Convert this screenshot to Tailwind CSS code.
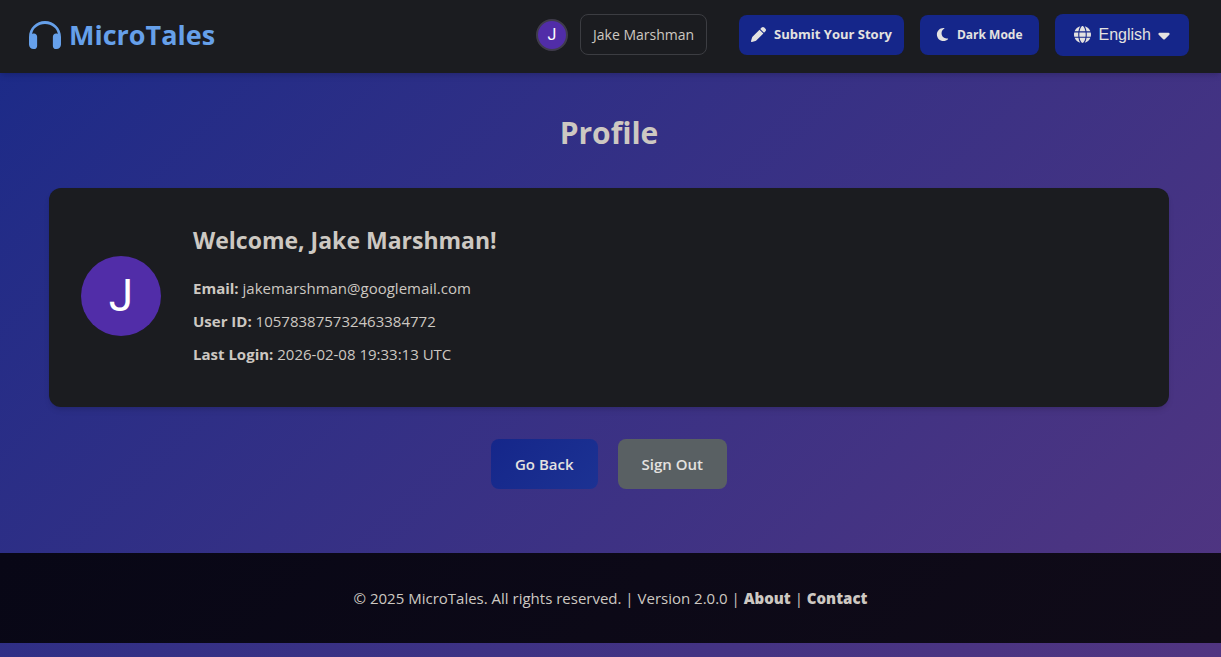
<!DOCTYPE html>
<html lang="en">
<head>
    <meta charset="UTF-8">
    <meta name="viewport" content="width=device-width, initial-scale=1.0">
    <title>Profile - MicroTales</title>
    <script src="https://cdn.jsdelivr.net/npm/@tailwindcss/browser@4"></script>
</head>
<body class="min-h-screen bg-linear-135 from-[#1a2a88] to-[#513581] font-['Segoe_UI','Open_Sans',sans-serif] text-[15px] text-[#cdc8c2]">

    <!--Navbar-->
    <header class="flex h-[73px] items-center justify-between bg-[#1b1c20] pr-8 pl-[29px] shadow-md">
        <a href="#" class="flex items-center gap-2 pb-1 text-[#66a0ea]">
            <svg class="h-7 w-8" viewBox="0 32 512 448" fill="currentColor" aria-hidden="true"><path d="M256 80C150 80 62 150 50 240c9-6 19-8 30-8c28 0 50 22 50 50V430c0 28-22 50-50 50H72C32 480 0 448 0 408V288C0 146.600 114.600 32 256 32s256 114.600 256 256V408c0 40-32 72-72 72h-8c-28 0-50-22-50-50V282c0-28 22-50 50-50c11 0 21 2 30 8C450 150 362 80 256 80z"/></svg>
            <span class="text-[27px] leading-9 font-bold">MicroTales</span>
        </a>
        <nav class="flex items-center gap-4 pb-1 text-[13px] text-[#e4e2e0]">
            <div class="mr-4 flex items-center gap-3">
                <span class="flex size-8 items-center justify-center rounded-full border-2 border-[#403c4c] bg-[#512da8] font-['Roboto',sans-serif] text-base text-white">J</span>
                <a href="#" class="flex h-[41px] items-center rounded-lg border border-[#3c3d42] px-3 text-sm text-[#cdc8c2]">Jake Marshman</a>
            </div>
            <a href="#" class="flex h-10 items-center gap-2 rounded-lg bg-[#15268a] px-3 font-bold">
                <svg class="size-[15px]" viewBox="0 0 512 512" fill="currentColor" aria-hidden="true"><path d="M362.7 19.3L314.3 67.7 444.3 197.7l48.4-48.4c25-25 25-65.5 0-90.5L453.3 19.3c-25-25-65.5-25-90.5 0zm-71 71L58.6 323.5c-10.4 10.4-18 23.3-22.2 37.4L1 481.2C-1.5 489.7 .8 498.8 7 505s15.3 8.5 23.7 6.1l120.3-35.4c14.1-4.2 27-11.8 37.4-22.2L421.7 220.3 291.7 90.3z"/></svg>
                Submit Your Story
            </a>
            <button type="button" class="flex h-10 items-center gap-2 rounded-lg bg-[#15268a] px-4 text-xs font-bold">
                <svg class="h-[15px] w-[13px]" viewBox="0 0 384 512" fill="currentColor" aria-hidden="true"><path d="M223.5 32C100 32 0 132.3 0 256S100 480 223.5 480c60.6 0 115.5-24.2 155.8-63.4c5-4.9 6.3-12.5 3.1-18.7s-10.1-9.7-17-8.5c-9.8 1.7-19.8 2.6-30.1 2.6c-96.9 0-175.5-78.8-175.5-176c0-65.8 36-123.1 89.3-153.3c6.1-3.5 9.2-10.5 7.7-17.3s-7.3-11.9-14.3-12.5c-6.3-.5-12.6-.8-19-.8z"/></svg>
                Dark Mode
            </button>
            <button type="button" class="flex h-[42px] items-center rounded-lg bg-[#15268a] px-[19px] font-['Liberation_Sans',sans-serif] text-base">
                <svg class="mr-2 size-[17px]" viewBox="0 0 512 512" fill="currentColor" aria-hidden="true"><path d="M352 256c0 22.2-1.2 43.6-3.3 64H163.3c-2.2-20.4-3.3-41.8-3.3-64s1.2-43.6 3.3-64H348.7c2.2 20.4 3.3 41.8 3.3 64zm28.8-64H503.9c5.3 20.5 8.1 41.9 8.1 64s-2.8 43.5-8.1 64H380.8c2.1-20.6 3.2-42 3.2-64s-1.1-43.4-3.2-64zm112.6-32H376.7c-10-63.9-29.8-117.4-55.3-151.6c78.3 20.7 142 77.5 171.9 151.6zm-149.1 0H167.7c6.1-36.4 15.5-68.6 27-94.7c10.5-23.6 22.2-40.7 33.5-51.5C239.4 3.2 248.7 0 256 0s16.6 3.2 27.8 13.8c11.3 10.8 23 27.9 33.5 51.5c11.6 26 20.9 58.2 27 94.7zm-209 0H18.6C48.6 85.9 112.2 29.1 190.6 8.4C165.1 42.6 145.3 96.1 135.3 160zM8.1 192H131.2c-2.1 20.6-3.2 42-3.2 64s1.1 43.4 3.2 64H8.1C2.8 299.5 0 278.1 0 256s2.8-43.5 8.1-64zM194.7 446.6c-11.6-26-20.9-58.2-27-94.6H344.3c-6.1 36.4-15.5 68.6-27 94.6c-10.5 23.6-22.2 40.7-33.5 51.5C272.6 508.8 263.3 512 256 512s-16.6-3.2-27.8-13.8c-11.3-10.8-23-27.9-33.5-51.5zM135.3 352c10 63.9 29.8 117.4 55.3 151.6C112.2 482.9 48.6 426.1 18.6 352H135.3zm358.1 0c-30 74.1-93.6 130.9-171.9 151.6c25.5-34.2 45.2-87.7 55.3-151.6H493.4z"/></svg>
                English
                <svg class="ml-[7px] h-[18px] w-3" viewBox="0 0 320 512" fill="currentColor" aria-hidden="true"><path d="M137.4 374.6c12.5 12.5 32.8 12.5 45.3 0l128-128c9.2-9.2 11.9-22.9 6.9-34.9s-16.6-19.8-29.6-19.8L32 192c-12.9 0-24.6 7.8-29.6 19.8s-2.2 25.7 6.9 34.9l128 128z"/></svg>
            </button>
        </nav>
    </header>

    <!--Profile-->
    <main class="pt-9 pr-[52px] pb-16 pl-[49px]">
        <h1 class="text-center text-[30px] leading-12 font-bold">Profile</h1>

        <section class="mt-[31px] flex items-center gap-8 rounded-xl bg-[#1b1c20] px-8 pt-8 pb-9 shadow-md">
            <div class="flex size-20 shrink-0 items-center justify-center rounded-full bg-[#512da8] font-['Roboto',sans-serif] text-[44px] text-white">J</div>
            <div class="pb-1">
                <h2 class="mb-4 text-[23px] leading-10 font-bold">Welcome, Jake Marshman!</h2>
                <div class="flex flex-col gap-2 leading-[25px]">
                    <p><strong>Email:</strong> jakemarshman@googlemail.com</p>
                    <p><strong>User ID:</strong> 105783875732463384772</p>
                    <p><strong>Last Login:</strong> 2026-02-08 19:33:13 UTC</p>
                </div>
            </div>
        </section>

        <div class="mt-8 flex justify-center gap-5 font-semibold text-[#e4e2e0]">
            <button type="button" class="h-[50px] rounded-lg bg-linear-135 from-[#15268a] to-[#1c3293] px-6">Go Back</button>
            <button type="button" class="h-[50px] rounded-lg bg-[#596063] px-6">Sign Out</button>
        </div>
    </main>

    <!--Footer-->
    <footer class="flex h-[90px] items-center justify-center bg-linear-135 from-[#080716] to-[#100b18]">
        <p>&copy; 2025 MicroTales. All rights reserved. | Version 2.0.0 | <a href="#" class="font-extrabold">About</a> | <a href="#" class="font-extrabold">Contact</a></p>
    </footer>

</body>
</html>
